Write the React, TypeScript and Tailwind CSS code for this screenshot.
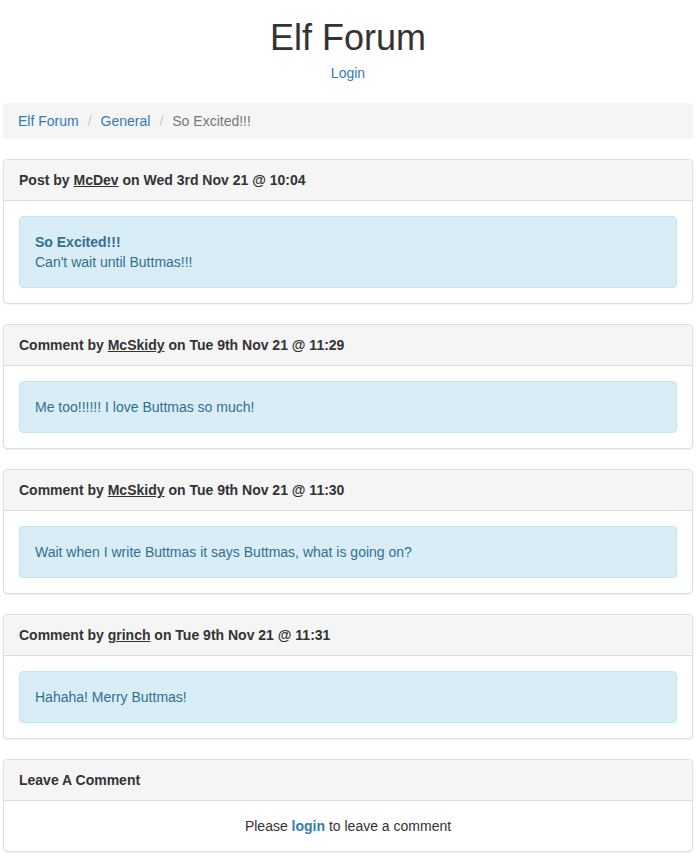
type Entry = {
	kind: "Post" | "Comment";
	user: string;
	date: string;
	title?: string;
	body: string;
};

const entries: Entry[] = [
	{
		kind: "Post",
		user: "McDev",
		date: "Wed 3rd Nov 21 @ 10:04",
		title: "So Excited!!!",
		body: "Can't wait until Buttmas!!!",
	},
	{
		kind: "Comment",
		user: "McSkidy",
		date: "Tue 9th Nov 21 @ 11:29",
		body: "Me too!!!!!! I love Buttmas so much!",
	},
	{
		kind: "Comment",
		user: "McSkidy",
		date: "Tue 9th Nov 21 @ 11:30",
		body: "Wait when I write Buttmas it says Buttmas, what is going on?",
	},
	{
		kind: "Comment",
		user: "grinch",
		date: "Tue 9th Nov 21 @ 11:31",
		body: "Hahaha! Merry Buttmas!",
	},
];

const Panel: React.FC<{ heading: React.ReactNode; children: React.ReactNode }> = ({
	heading,
	children,
}) => (
	<div className="mb-5 rounded border border-[#ddd] bg-white shadow-[0_1px_1px_rgba(0,0,0,0.05)]">
		<div className="rounded-t border-b border-[#ddd] bg-[#f5f5f5] px-[15px] py-[10px] font-bold text-[#333]">
			{heading}
		</div>
		<div className="p-[15px]">{children}</div>
	</div>
);

export default function App() {
	return (
		<div className="min-h-screen bg-white pl-[3px] pr-[4px] font-['Liberation_Sans',Arial,sans-serif] text-[14px] leading-[20px] text-[#333]">
			<h1 className="mt-[18px] text-center text-[36px] leading-[40px] font-medium">
				Elf Forum
			</h1>
			<div className="mt-[5px] text-center">
				<a href="#" className="text-[#337ab7]">
					Login
				</a>
			</div>

			<ol className="mt-5 mb-5 flex rounded bg-[#f5f5f5] px-[15px] py-2">
				<li>
					<a href="#" className="text-[#337ab7]">
						Elf Forum
					</a>
				</li>
				<li className="flex">
					<span className="px-[9px] text-[#ccc]">/</span>
					<a href="#" className="text-[#337ab7]">
						General
					</a>
				</li>
				<li className="flex text-[#777]">
					<span className="px-[9px] text-[#ccc]">/</span>
					So Excited!!!
				</li>
			</ol>

			{entries.map((e, i) => (
				<Panel
					key={i}
					heading={
						<>
							{e.kind} by <u>{e.user}</u> on {e.date}
						</>
					}
				>
					<div className="rounded border border-[#bce8f1] bg-[#d9edf7] p-[15px] text-[#31708f]">
						{e.title && <div className="font-bold">{e.title}</div>}
						<div>{e.body}</div>
					</div>
				</Panel>
			))}

			<Panel heading="Leave A Comment">
				<div className="text-center">
					Please{" "}
					<a href="#" className="font-bold text-[#337ab7]">
						login
					</a>{" "}
					to leave a comment
				</div>
			</Panel>
		</div>
	);
}
